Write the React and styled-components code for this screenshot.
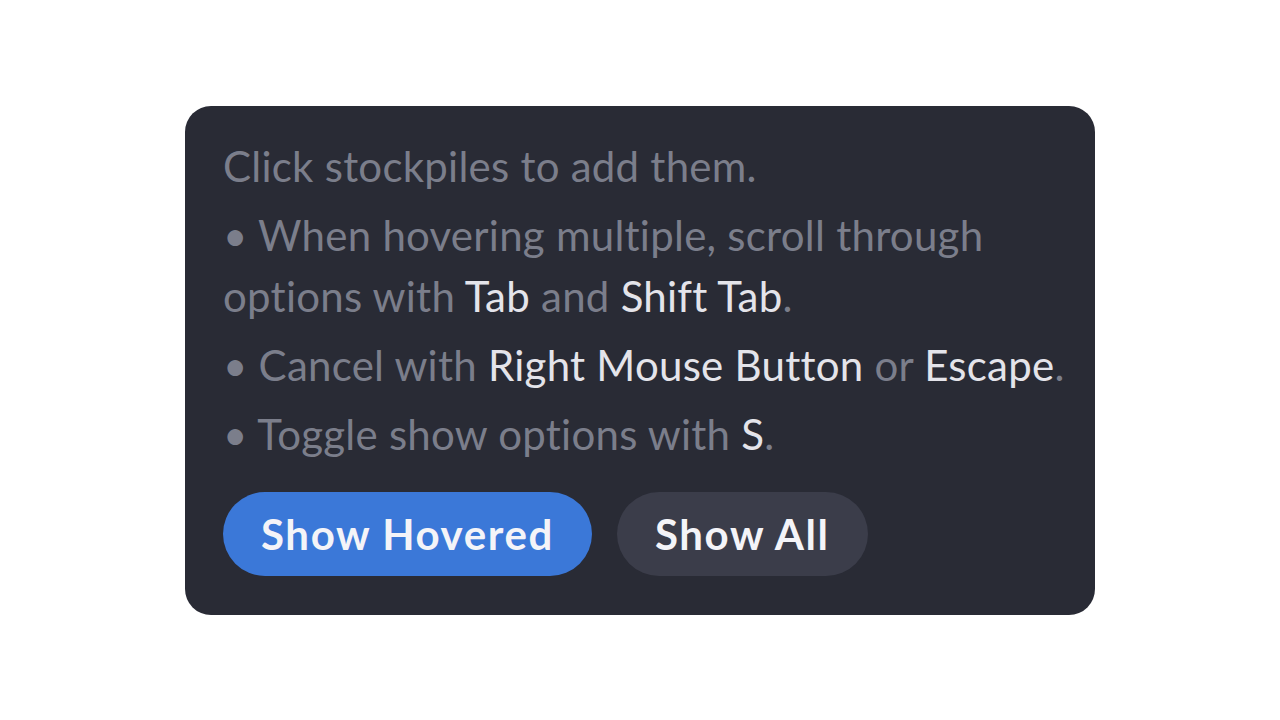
import React from 'react'
import styled, { createGlobalStyle } from 'styled-components'

const GlobalStyle = createGlobalStyle`
    html, body {
        margin: 0;
        padding: 0;
        background: #ffffff;
    }
    body {
        font-family: 'Lato', 'Noto Sans', sans-serif;
    }
`

const Page = styled.div`
    width: 1280px;
    height: 720px;
    display: flex;
    align-items: center;
    justify-content: center;
`

const Card = styled.div`
    width: 910px;
    box-sizing: border-box;
    background: #292b35;
    border-radius: 26px;
    padding: 30px 26px 39px 38px;
    display: flex;
    flex-direction: column;
`

const Line = styled.p`
    margin: 0 0 8px;
    font-size: 42px;
    line-height: 61px;
    letter-spacing: 0.25px;
    color: #7b7e8b;
`

const Key = styled.span`
    color: #e4e4ea;
`

const Buttons = styled.div`
    display: flex;
    gap: 25px;
    margin-top: 19px;
`

const Button = styled.button`
    height: 84px;
    padding: 0 38px;
    border: none;
    border-radius: 42px;
    font-family: 'Lato', sans-serif;
    font-weight: 700;
    font-size: 42px;
    letter-spacing: 1.6px;
    color: #f4f4f8;
    background: ${props => props.active ? '#3b78d8' : '#3b3d4a'};
    cursor: pointer;
`

const App = () => {
    return (
        <>
        <GlobalStyle />
        <Page>
            <Card>
                <Line>Click stockpiles to add them.</Line>
                <Line>• When hovering multiple, scroll through options with <Key>Tab</Key> and <Key>Shift Tab</Key>.</Line>
                <Line>• Cancel with <Key>Right Mouse Button</Key> or <Key>Escape</Key>.</Line>
                <Line>• Toggle show options with <Key>S</Key>.</Line>
                <Buttons>
                    <Button active>Show Hovered</Button>
                    <Button>Show All</Button>
                </Buttons>
            </Card>
        </Page>
        </>
    )
}

export default App
